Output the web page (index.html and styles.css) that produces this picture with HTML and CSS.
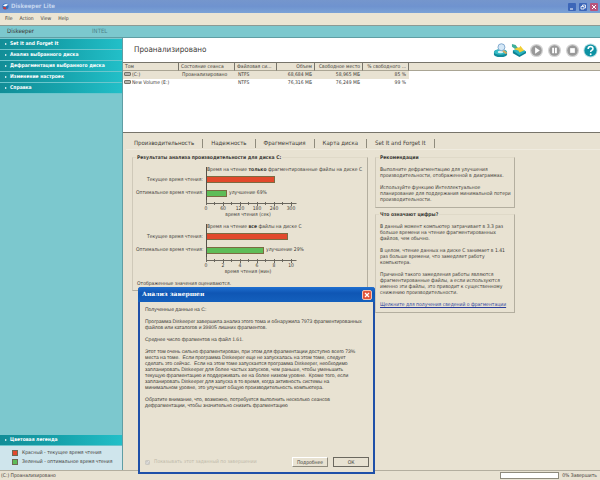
FILE: index.html
```html
<!DOCTYPE html>
<html lang="ru">
<head>
  <meta charset="utf-8">
  <meta name="viewport" content="width=device-width, initial-scale=1.0">
  <title>Diskeeper Lite</title>
  <link rel="stylesheet" href="styles.css">
</head>
<body>
  <header class="titlebar">
    <svg class="app-icon" viewBox="0 0 8 8">
      <circle cx="4" cy="4" r="3.5" fill="#2f6fc0"/>
      <path d="M1 3q3-3 6-1L4 4z" fill="#fff"/>
      <path d="M1 5l3-1 1 3H2z" fill="#c43b3b"/>
    </svg>
    <h1>Diskeeper Lite</h1>
    <button class="win-btn" aria-label="Свернуть"><svg viewBox="0 0 8 8"><path d="M2 6h3" stroke="#fff"/></svg></button>
    <button class="win-btn" aria-label="Восстановить"><svg viewBox="0 0 8 8"><path d="M3.5 3V2h3v3h-1M2 3.5h3v2.500H2z" fill="none" stroke="#fff" stroke-width=".8"/></svg></button>
    <button class="win-btn close" aria-label="Закрыть"><svg viewBox="0 0 8 8"><path d="M2 2l4 4M6 2L2 6" stroke="#fff"/></svg></button>
  </header>

  <nav class="menu">
    <a href="#">File</a>
    <a href="#">Action</a>
    <a href="#">View</a>
    <a href="#">Help</a>
  </nav>

  <div class="brand">
    <span class="brand-name">Diskeeper</span>
    <span class="brand-host">INTEL</span>
  </div>

  <div class="workspace">
    <!-- Side menu and legend -->
    <aside class="sidebar">
      <nav class="side-nav">
        <a class="side-item" href="#">Set It and Forget It</a>
        <a class="side-item" href="#">Анализ выбранного диска</a>
        <a class="side-item" href="#">Дефрагментация выбранного диска</a>
        <a class="side-item" href="#">Изменение настроек</a>
        <a class="side-item" href="#">Справка</a>
      </nav>
      <section class="legend">
        <h2 class="side-item">Цветовая легенда</h2>
        <ul>
          <li><i class="swatch red"></i>Красный - текущее время чтения</li>
          <li><i class="swatch green"></i>Зеленый - оптимальное время чтения</li>
        </ul>
      </section>
    </aside>

    <main class="main">
      <!-- Volume list -->
      <section class="volumes">
        <div class="volumes-head">
          <h2>Проанализировано</h2>
          <div class="toolbar">
            <button aria-label="Анализ">
              <svg viewBox="0 0 16 16">
                <path d="M1 10q0-3 7-3t7 3v2q0 3-7 3t-7-3z" fill="#118a9a"/>
                <ellipse cx="8" cy="9.500" rx="7" ry="3" fill="#35bcc6"/>
                <ellipse cx="8" cy="9.500" rx="3" ry="1.300" fill="#d8f3f5"/>
                <path d="M11 7l4 3-1 2-4-3z" fill="#d9a95c"/>
                <circle cx="9" cy="4.500" r="3.700" fill="#d5e8f7" stroke="#7fa6cc"/>
              </svg>
            </button>
            <button aria-label="Дефрагментация">
              <svg viewBox="0 0 16 16">
                <path d="M2 8l7-3 7 4v2l-7 4-7-4z" fill="#0d8191"/>
                <path d="M2 8l7-3 7 4-7 4z" fill="#2bb3bf"/>
                <path d="M4 4l5 1 1-2 4 5-5 2-1-2-4-1z" fill="#f2cf35"/>
                <path d="M1 1l4 1 2 3-3 1-3-2z" fill="#3fae9a"/>
              </svg>
            </button>
            <button aria-label="Пуск">
              <svg viewBox="0 0 16 16">
                <circle cx="8" cy="8" r="7" fill="#d4d4d4"/><circle cx="8" cy="8" r="5.600" fill="#999"/>
                <path d="M6.500 4.500v7l5-3.500z" fill="#fff"/>
              </svg>
            </button>
            <button aria-label="Пауза">
              <svg viewBox="0 0 16 16">
                <circle cx="8" cy="8" r="7" fill="#d4d4d4"/><circle cx="8" cy="8" r="5.600" fill="#999"/>
                <path d="M5.500 5h2v6h-2zM8.500 5h2v6h-2z" fill="#fff"/>
              </svg>
            </button>
            <button aria-label="Стоп">
              <svg viewBox="0 0 16 16">
                <circle cx="8" cy="8" r="7" fill="#d4d4d4"/><circle cx="8" cy="8" r="5.600" fill="#999"/>
                <path d="M5.500 5.500h5v5h-5z" fill="#fff"/>
              </svg>
            </button>
            <button aria-label="Справка">
              <svg viewBox="0 0 16 16">
                <circle cx="8" cy="8" r="7.500" fill="#b9dde2"/><circle cx="8" cy="8" r="6.500" fill="#0d92a3"/>
                <path d="M5.500 6.300q0-2.500 2.600-2.500t2.500 2.200q0 1.200-1.400 1.900-1 .6-1 1.600" fill="none" stroke="#fff" stroke-width="1.700"/>
                <circle cx="8.200" cy="12" r="1" fill="#fff"/>
              </svg>
            </button>
          </div>
        </div>
        <table class="volume-table">
          <colgroup>
            <col class="c-vol"><col class="c-state"><col class="c-fs"><col class="c-size"><col class="c-free"><col class="c-pct"><col>
          </colgroup>
          <thead>
            <tr>
              <th>Том</th>
              <th>Состояние сеанса</th>
              <th>Файловая си...</th>
              <th class="num">Объем</th>
              <th class="num">Свободное место</th>
              <th class="num">% свободного ...</th>
              <th></th>
            </tr>
          </thead>
          <tbody>
            <tr class="selected">
              <td><i class="disk"></i>(C:)</td>
              <td>Проанализировано</td>
              <td>NTFS</td>
              <td class="num">68,684 МБ</td>
              <td class="num">58,965 МБ</td>
              <td class="num">85 %</td>
              <td></td>
            </tr>
            <tr>
              <td><i class="disk"></i>New Volume (E:)</td>
              <td></td>
              <td>NTFS</td>
              <td class="num">76,316 МБ</td>
              <td class="num">76,249 МБ</td>
              <td class="num">99 %</td>
              <td></td>
            </tr>
          </tbody>
        </table>
      </section>

      <nav class="tabs">
        <a class="active" href="#">Производительность</a>
        <a href="#">Надежность</a>
        <a href="#">Фрагментация</a>
        <a href="#">Карта диска</a>
        <a href="#">Set It and Forget It</a>
      </nav>

      <div class="report">
        <!-- Read time charts -->
        <section class="box results">
          <h3>Результаты анализа производительности для диска C:</h3>
          <div class="chart">
            <div class="plot-title">Время на чтение <b>только</b> фрагментированные файлы на диске C</div>
            <div class="bar-label">Текущее время чтения:</div>
            <div class="plot"><span class="bar red" style="width: 68px"></span></div>
            <div class="bar-label">Оптимальное время чтения:</div>
            <div class="plot"><span class="bar green" style="width: 20px"></span>улучшение 69%</div>
            <svg class="axis" viewBox="0 0 110 17" width="110" height="17">
              <path d="M10.500 3.500h90M10.500 0v5M18.500 2v3M27.500 2v4M35.500 2v3M44.500 2v4M52.500 2v3M61.500 2v4M69.500 2v3M78.500 2v4M86.500 2v3M95.500 2v4"/>
              <text x="10" y="10">0</text><text x="27" y="10">60</text><text x="44" y="10">120</text>
              <text x="61" y="10">180</text><text x="78" y="10">240</text><text x="95" y="10">300</text>
              <text x="52" y="16">время чтения (сек)</text>
            </svg>
          </div>
          <div class="chart">
            <div class="plot-title">Время на чтение <b>все</b> файлы на диске C</div>
            <div class="bar-label">Текущее время чтения:</div>
            <div class="plot"><span class="bar red" style="width: 81px"></span></div>
            <div class="bar-label">Оптимальное время чтения:</div>
            <div class="plot"><span class="bar green" style="width: 57px"></span>улучшение 29%</div>
            <svg class="axis" viewBox="0 0 110 17" width="110" height="17">
              <path d="M10.500 3.500h90M10.500 0v5M18.500 2v3M27.500 2v4M35.500 2v3M44.500 2v4M52.500 2v3M61.500 2v4M69.500 2v3M78.500 2v4M86.500 2v3M95.500 2v4"/>
              <text x="10" y="10">0</text><text x="27" y="10">2</text><text x="44" y="10">4</text>
              <text x="61" y="10">6</text><text x="78" y="10">8</text><text x="95" y="10">10</text>
              <text x="52" y="16">время чтения (мин)</text>
            </svg>
          </div>
          <p>Отображенные значения оцениваются.</p>
        </section>

        <div class="notes">
          <section class="box">
            <h3>Рекомендации</h3>
            <p>Выполните дефрагментацию для улучшения<br>производительности, отображенной в диаграммах.</p>
            <p>Используйте функцию Интеллектуальное<br>планирование для поддержания минимальной потери<br>производительности.</p>
          </section>
          <section class="box">
            <h3>Что означают цифры?</h3>
            <p>В данный момент компьютер затрачивает в 3.3 раз<br>больше времени на чтение фрагментированных<br>файлов, чем обычно.</p>
            <p>В целом, чтение данных на диске C занимает в 1.41<br>раз больше времени, что замедляет работу<br>компьютера.</p>
            <p>Причиной такого замедления работы являются<br>фрагментированные файлы, а если используются<br>именно эти файлы, это приводит к существенному<br>снижению производительности.</p>
            <p><a href="#">Щелкните для получения сведений о фрагментации</a></p>
          </section>
        </div>
      </div>
    </main>
  </div>

  <footer class="statusbar">
    <span>(C:) Проанализировано</span>
    <span class="progress"></span>
    <span>0% Завершить</span>
  </footer>

  <!-- Result dialog -->
  <div class="dialog" role="dialog" aria-labelledby="dialog-title">
    <div class="dialog-title">
      <h2 id="dialog-title">Анализ завершен</h2>
      <button class="dialog-close" aria-label="Закрыть"><svg viewBox="0 0 8 8"><path d="M2 2l4 4M6 2L2 6" stroke="#fff" stroke-width="1.200"/></svg></button>
    </div>
    <div class="dialog-body">
      <p>Полученные данные на C:</p>
      <p>Программа Diskeeper завершила анализ этого тома и обнаружила 7973 фрагментированных<br>файлов или каталогов и 39805 лишних фрагментов.</p>
      <p>Среднее число фрагментов на файл 1.61.</p>
      <p>Этот том очень сильно фрагментирован, при этом для фрагментации доступно всего 73%<br>места на томе.  Если программа Diskeeper еще не запускалась на этом томе, следует<br>сделать это сейчас.  Если на этом томе запускается программа Diskeeper, необходимо<br>запланировать Diskeeper для более частых запусков, чем раньше, чтобы уменьшить<br>текущую фрагментацию и поддерживать ее на более низком уровне.  Кроме того, если<br>запланировать Diskeeper для запуска в то время, когда активность системы на<br>минимальном уровне, это улучшит общую производительность компьютера.</p>
      <p>Обратите внимание, что, возможно, потребуется выполнить несколько сеансов<br>дефрагментации, чтобы значительно снизить фрагментацию</p>
    </div>
    <div class="dialog-foot">
      <label><input type="checkbox" checked disabled>Показывать этот заданный по завершении</label>
      <button class="btn">Подробнее</button>
      <button class="btn default">ОК</button>
    </div>
  </div>
</body>
</html>
```
FILE: styles.css
```css
* {
  box-sizing: border-box;
}

body {
  display: flex;
  flex-direction: column;
  min-height: 100vh;
  margin: 0;
  position: relative;
  background: #e8e2d2;
  color: #3c3a36;
  font: 5px/6px "DejaVu Sans Condensed", "DejaVu Sans", sans-serif;
  text-rendering: geometricPrecision;
}

h1, h2, h3, p, ul {
  margin: 0;
  padding: 0;
  font-size: inherit;
}

a {
  color: inherit;
  text-decoration: none;
}

button {
  padding: 0;
  border: 0;
  background: none;
  color: inherit;
  font: inherit;
}

svg {
  display: block;
}

/* Window frame */
.titlebar {
  display: flex;
  align-items: center;
  gap: 2px;
  height: 13px;
  padding: 0 2px;
  background: linear-gradient(#7596cc, #6f93cf 50%, #7ba3d6);
  color: #c3d5ee;
}

.titlebar h1 {
  flex: 1;
  font-size: 6px;
}

.app-icon {
  width: 7px;
  height: 7px;
}

.win-btn {
  width: 8px;
  height: 8px;
  margin-left: 1px;
  border-radius: 1px;
  background: #3c66b8;
}

.win-btn.close {
  background: #b8537c;
}

.menu {
  display: flex;
  align-items: center;
  gap: 7px;
  height: 12px;
  padding: 0 5px;
  background: #ebe5d3;
}

.brand {
  display: flex;
  align-items: center;
  height: 13px;
  padding: 0 7px;
  border-top: 1px solid #8c9a94;
  border-bottom: 1px solid #5f9ea4;
  background: #7cc8ce;
  font-size: 6px;
}

.brand-name {
  width: 85px;
}

.brand-host {
  color: #4f8389;
}

.workspace {
  display: flex;
  flex: 1;
}

/* Sidebar */
.sidebar {
  display: flex;
  flex-direction: column;
  justify-content: space-between;
  width: 123px;
  border-right: 1px solid #5f9ea4;
  background: #7cc8ce;
}

.side-item {
  display: flex;
  align-items: center;
  gap: 2px;
  height: 11px;
  padding-left: 5px;
  border-bottom: 1px solid #6cc6cc;
  background: linear-gradient(90deg, #128d97, #16a3ac 50%, #22bfc8);
  color: #fff;
  font-weight: bold;
}

.side-item::before {
  content: "";
  border: 1px solid transparent;
  border-left: 2px solid #fff;
}

.side-nav {
  padding-top: 1px;
}

.legend ul {
  padding: 2px 12px 4px;
  background: #cfe5ec;
  list-style: none;
}

.legend li {
  display: flex;
  align-items: center;
  gap: 4px;
  height: 9px;
  white-space: nowrap;
}

.swatch {
  flex: none;
  width: 6px;
  height: 6px;
  border: 1px solid #6d6a55;
}

.red {
  background: #e2492c;
}

.green {
  background: #5ebd58;
}

/* Volume list */
.main {
  flex: 1;
  min-width: 0;
}

.volumes {
  min-height: 95px;
  border-bottom: 1px solid #77746a;
  background: #fff;
}

.volumes-head {
  display: flex;
  align-items: center;
  justify-content: space-between;
  height: 24px;
  padding: 0 1px 0 11px;
}

.volumes-head h2 {
  font-size: 8px;
  font-weight: normal;
}

.toolbar {
  display: flex;
  gap: 2px;
}

.toolbar button {
  width: 16px;
  height: 15px;
}

.toolbar svg {
  width: 15px;
  height: 15px;
}

.volume-table {
  width: 100%;
  table-layout: fixed;
  border-collapse: separate;
  border-spacing: 0;
  white-space: nowrap;
}

.c-vol, .c-state { width: 56px; }
.c-fs { width: 42px; }
.c-size { width: 38px; }
.c-free { width: 48px; }
.c-pct { width: 46px; }

.volume-table th {
  height: 9px;
  padding: 0 2px;
  border-top: 1px solid #77746a;
  border-bottom: 1px solid #aaa594;
  border-right: 1px solid #77746a;
  background: #e8e2d2;
  font-weight: normal;
  text-align: left;
}

.volume-table th:last-child {
  border-right: 0;
}

.volume-table td {
  height: 8px;
  padding: 0 3px;
}

.volume-table td:first-child {
  padding-left: 1px;
}

.volume-table .num {
  text-align: right;
}

.selected td:not(:last-child) {
  background: #e8e2d2;
}

.disk {
  display: inline-block;
  width: 7px;
  height: 4px;
  margin-right: 1px;
  border: 1px solid #77746a;
  border-radius: 1px;
  background: #b9b6b0;
}

/* Tabs */
.tabs {
  display: flex;
  align-items: center;
  height: 17px;
  margin-left: 3px;
  padding-top: 5px;
  border-bottom: 1px solid #efebdf;
  font-size: 6px;
  line-height: 9px;
}

.tabs a {
  padding: 0 8px;
  border-right: 1px solid #8f8b7d;
}

/* Report */
.report {
  display: flex;
  align-items: flex-start;
  gap: 7px;
  padding: 7px 8px 0 9px;
}

.box {
  padding: 0 4px 4px 3px;
  border: 1px solid #b3ae9f;
  border-top-color: #dfd9c8;
  border-left-color: #cfc9b9;
}

.box h3 {
  display: table;
  margin-top: -3px;
  padding: 0 1px;
  background: #e8e2d2;
}

.box p {
  margin: 6px 0 0 1px;
  white-space: nowrap;
}

.results {
  width: 236px;
  height: 134px;
}

.chart {
  display: grid;
  grid-template-columns: 70px 1fr;
  grid-template-rows: 6px 13px 14px 17px;
  margin: 6px 0 7px;
}

.plot-title {
  grid-column: 2;
  border-left: 1px solid #55524a;
  white-space: nowrap;
}

.bar-label {
  align-self: center;
  padding-right: 3px;
  text-align: right;
  white-space: nowrap;
}

.plot {
  display: flex;
  align-items: center;
  gap: 2px;
  border-left: 1px solid #55524a;
}

.bar {
  height: 7px;
  border: 1px solid #7c6b42;
  border-left: 0;
}

.axis {
  grid-column: 2;
  margin-left: -10px;
}

.axis path {
  fill: none;
  stroke: #6b685f;
}

.axis text {
  fill: #3c3a36;
  text-anchor: middle;
}

.notes {
  display: flex;
  flex-direction: column;
  gap: 6px;
  width: 140px;
}

.notes a {
  color: #2b3f9c;
  text-decoration: underline;
}

/* Status bar */
.statusbar {
  display: flex;
  align-items: center;
  gap: 3px;
  height: 10px;
  padding: 0 3px 0 1px;
  border-top: 1px solid #b3ae9f;
}

.progress {
  width: 59px;
  height: 7px;
  margin-left: auto;
  border: 1px solid #8f8b7d;
  background: #fff;
}

/* Dialog */
.dialog {
  position: absolute;
  top: 287px;
  left: 138px;
  display: flex;
  flex-direction: column;
  width: 237px;
  min-height: 187px;
  border: 2px solid #1f50a8;
  border-top: 0;
  border-radius: 3px 3px 0 0;
  background: #e8e2d2;
}

.dialog-title {
  display: flex;
  align-items: center;
  justify-content: space-between;
  height: 15px;
  margin: 0 -2px;
  padding: 0 3px 0 4px;
  border-radius: 3px 3px 0 0;
  background: linear-gradient(#1f6fd0, #0f56b4 40%, #1460bd);
  color: #fff;
}

.dialog-title h2 {
  font: bold 6px/8px "DejaVu Serif", serif;
}

.dialog-close {
  width: 10px;
  height: 10px;
  border: 1px solid #f0c4b4;
  border-radius: 2px;
  background: #e2553a;
}

.dialog-body {
  flex: 1;
  padding: 5px 0 0 5px;
  font-family: "Liberation Sans", Arial, sans-serif;
}

.dialog-body p {
  margin-bottom: 6px;
  white-space: pre;
}

.dialog-foot {
  display: flex;
  align-items: center;
  gap: 5px;
  padding: 0 4px 5px 5px;
}

.dialog-foot label {
  display: flex;
  flex: 1;
  align-items: center;
  gap: 4px;
  color: #bdb8a8;
}

.dialog-foot input {
  width: 5px;
  height: 5px;
  margin: 0;
}

.btn {
  width: 36px;
  height: 10px;
  border: 1px solid;
  border-color: #fff #8f8b7d #8f8b7d #fff;
}

.btn.default {
  border-color: #6b685f;
}
```
